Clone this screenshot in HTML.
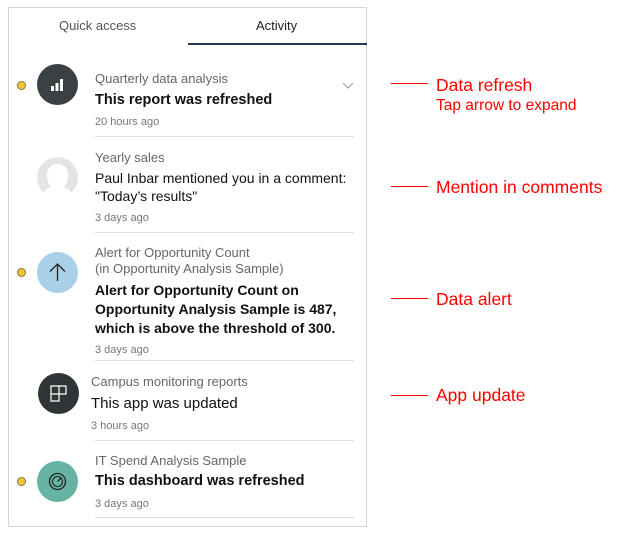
<!DOCTYPE html>
<html><head><style>
body{margin:0;width:620px;height:534px;background:#fff;position:relative;font-family:"Liberation Sans",sans-serif;overflow:hidden}
.a{position:absolute;white-space:nowrap}
.panel{position:absolute;left:8px;top:7px;width:359px;height:520px;border:1px solid #d4d4d4;box-sizing:border-box}
.g{color:#666;font-size:13px}
.b{color:#111;font-size:14px;font-weight:bold}
.n{color:#111;font-size:14px}
.t{color:#777;font-size:11px}
.hr{position:absolute;left:95px;width:259px;height:1px;background:#ddd}
.c{position:absolute;width:41px;height:41px;border-radius:50%}
.dot{position:absolute;width:7px;height:7px;border-radius:50%;background:#efc53a;border:1px solid #8a7a30}
.r{color:#f00;font-size:17.5px;font-family:"Liberation Sans",sans-serif}
.ln{position:absolute;left:391px;width:37px;height:1px;background:#f00}
</style></head><body>
<div class="panel"></div>
<div class="a" style="left:59px;top:18px;font-size:13px;color:#555">Quick access</div>
<div class="a" style="left:256px;top:18px;font-size:13px;color:#222">Activity</div>
<div class="a" style="left:188px;top:43px;width:179px;height:2px;background:#2b3550"></div>

<div class="dot" style="left:17px;top:81px"></div>
<div class="c" style="left:37px;top:64px;background:#3a4043"></div>
<svg class="a" style="left:48px;top:75px" width="20" height="20"><rect x="3" y="11" width="3" height="5" fill="#fff"/><rect x="7.5" y="8" width="3" height="8" fill="#fff"/><rect x="12" y="4" width="3" height="12" fill="#fff"/></svg>
<div class="a g" style="left:95px;top:71px">Quarterly data analysis</div>
<div class="a b" style="left:95px;top:92px;font-size:14.5px">This report was refreshed</div>
<div class="a t" style="left:95px;top:116px">20 hours ago</div>
<svg class="a" style="left:342px;top:82px" width="12" height="8"><path d="M1 1L6 6L11 1" stroke="#999" fill="none"/></svg>
<div class="hr" style="top:136px"></div>

<svg class="a" style="left:37px;top:157px" width="41" height="41"><defs><clipPath id="cc"><circle cx="20.5" cy="20.5" r="20.5"/></clipPath></defs><g clip-path="url(#cc)"><rect width="41" height="41" fill="#e4e4e4"/><path d="M4 41 C6 33 12 31 14 30 C11 27 10 22 10 18 C10 11 14 7 20.5 7 C27 7 31 11 31 18 C31 22 30 27 27 30 C29 31 35 33 37 41 Z" fill="#fff"/></g></svg>
<div class="a g" style="left:95px;top:150px">Yearly sales</div>
<div class="a n" style="left:95px;top:170px">Paul Inbar mentioned you in a comment:</div>
<div class="a n" style="left:95px;top:188px">"Today’s results"</div>
<div class="a t" style="left:95px;top:212px">3 days ago</div>
<div class="hr" style="top:232px"></div>

<div class="dot" style="left:17px;top:268px"></div>
<div class="c" style="left:37px;top:252px;background:#a8d0e6"></div>
<svg class="a" style="left:47px;top:262px" width="21" height="21"><path d="M10.5 19V2M3 9.5L10.5 2L18 9.5" stroke="#222" stroke-width="1.3" fill="none"/></svg>
<div class="a g" style="left:95px;top:245px">Alert for Opportunity Count</div>
<div class="a g" style="left:95px;top:261px">(in Opportunity Analysis Sample)</div>
<div class="a b" style="left:95px;top:282px">Alert for Opportunity Count on</div>
<div class="a b" style="left:95px;top:301px">Opportunity Analysis Sample is 487,</div>
<div class="a b" style="left:95px;top:320px">which is above the threshold of 300.</div>
<div class="a t" style="left:95px;top:344px">3 days ago</div>
<div class="hr" style="top:360px"></div>

<div class="c" style="left:38px;top:373px;background:#2f3437"></div>
<svg class="a" style="left:49px;top:384px" width="20" height="20"><path d="M2 2H17V10H10V17H2ZM2 10H10M10 2V10" stroke="#fff" stroke-width="1.2" fill="none"/></svg>
<div class="a g" style="left:91px;top:374px">Campus monitoring reports</div>
<div class="a n" style="left:91px;top:395px;font-size:15px">This app was updated</div>
<div class="a t" style="left:91px;top:420px">3 hours ago</div>
<div class="hr" style="top:440px"></div>

<div class="dot" style="left:17px;top:477px"></div>
<div class="c" style="left:37px;top:461px;background:#67b3a3"></div>
<svg class="a" style="left:47px;top:471px" width="21" height="21"><circle cx="10.5" cy="10.5" r="8" stroke="#222" stroke-width="1.3" fill="none"/><circle cx="10.5" cy="10.5" r="5" stroke="#222" stroke-width="1.1" fill="none"/><path d="M10.5 10.5L14 7" stroke="#222" stroke-width="1.3"/></svg>
<div class="a g" style="left:95px;top:453px">IT Spend Analysis Sample</div>
<div class="a b" style="left:95px;top:473px;font-size:14.5px">This dashboard was refreshed</div>
<div class="a t" style="left:95px;top:498px">3 days ago</div>
<div class="hr" style="top:517px"></div>

<div class="ln" style="top:83px"></div>
<div class="a r" style="left:436px;top:75px">Data refresh</div>
<div class="a r" style="left:436px;top:97px;font-size:15.5px">Tap arrow to expand</div>
<div class="ln" style="top:186px"></div>
<div class="a r" style="left:436px;top:177px">Mention in comments</div>
<div class="ln" style="top:298px"></div>
<div class="a r" style="left:436px;top:289px">Data alert</div>
<div class="ln" style="top:395px"></div>
<div class="a r" style="left:436px;top:385px">App update</div>
</body></html>
